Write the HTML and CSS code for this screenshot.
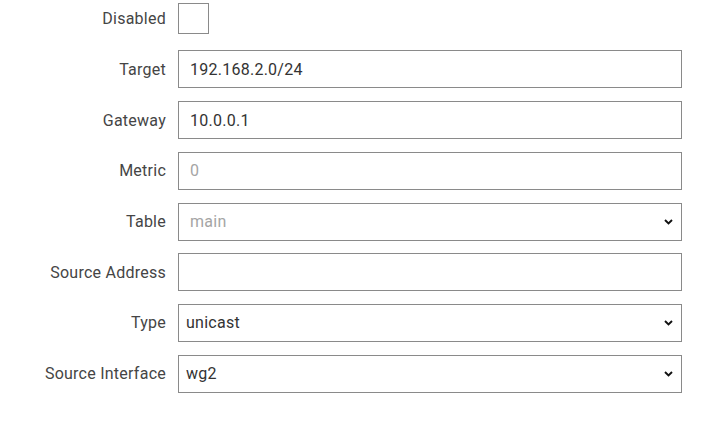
FILE: index.html
```html
<!DOCTYPE html>
<html>
<head>
<meta charset="utf-8">
<link rel="stylesheet" href="styles.css">
</head>
<body>
<form class="form">
  <div class="row row-first">
    <label class="label" for="disabled">Disabled</label>
    <div class="control"><input id="disabled" class="checkbox" type="checkbox"></div>
  </div>
  <div class="row">
    <label class="label" for="target">Target</label>
    <div class="control"><input id="target" class="text" type="text" value="192.168.2.0/24"></div>
  </div>
  <div class="row">
    <label class="label" for="gateway">Gateway</label>
    <div class="control"><input id="gateway" class="text" type="text" value="10.0.0.1"></div>
  </div>
  <div class="row">
    <label class="label" for="metric">Metric</label>
    <div class="control"><input id="metric" class="text" type="text" placeholder="0"></div>
  </div>
  <div class="row">
    <label class="label" for="table">Table</label>
    <div class="control select-wrap">
      <select id="table" class="select select-placeholder"><option>main</option></select>
      <svg class="chevron" width="9" height="6" viewBox="0 0 9 6"><polyline points="1,1 4.5,4.5 8,1" fill="none" stroke="#111" stroke-width="1.9"/></svg>
    </div>
  </div>
  <div class="row">
    <label class="label" for="srcaddr">Source Address</label>
    <div class="control"><input id="srcaddr" class="text" type="text"></div>
  </div>
  <div class="row">
    <label class="label" for="type">Type</label>
    <div class="control select-wrap">
      <select id="type" class="select"><option>unicast</option></select>
      <svg class="chevron" width="9" height="6" viewBox="0 0 9 6"><polyline points="1,1 4.5,4.5 8,1" fill="none" stroke="#111" stroke-width="1.9"/></svg>
    </div>
  </div>
  <div class="row">
    <label class="label" for="srciface">Source Interface</label>
    <div class="control select-wrap">
      <select id="srciface" class="select"><option>wg2</option></select>
      <svg class="chevron" width="9" height="6" viewBox="0 0 9 6"><polyline points="1,1 4.5,4.5 8,1" fill="none" stroke="#111" stroke-width="1.9"/></svg>
    </div>
  </div>
</form>
</body>
</html>
```

FILE: styles.css
```css
html, body {
  margin: 0;
  padding: 0;
  background: #fff;
}

body {
  font-family: Roboto, "Liberation Sans", sans-serif;
  font-size: 16px;
  letter-spacing: 0.25px;
  color: #454545;
  width: 710px;
  height: 425px;
  overflow: hidden;
}

.form {
  display: flex;
  flex-direction: column;
  gap: 12.7px;
  margin: 0;
}

.row {
  display: flex;
  align-items: center;
  gap: 12px;
  height: 38px;
}

.row-first {
  height: 37.8px;
}

.label {
  width: 166px;
  text-align: right;
  flex: none;
  color: #454545;
}

.control {
  width: 504px;
  height: 38px;
  display: flex;
  align-items: center;
  flex: none;
}

.select-wrap {
  position: relative;
}

.checkbox {
  appearance: none;
  -webkit-appearance: none;
  margin: 0;
  width: 31px;
  height: 31px;
  border: 1px solid #8a8a8a;
  background: #fff;
  box-sizing: border-box;
}

.text,
.select {
  appearance: none;
  -webkit-appearance: none;
  box-sizing: border-box;
  width: 504px;
  height: 38px;
  margin: 0;
  border: 1px solid #8a8a8a;
  border-radius: 0;
  background: #fff;
  font-family: Roboto, "Liberation Sans", sans-serif;
  font-size: 16px;
  letter-spacing: 0.25px;
  color: #333;
  outline: none;
}

.text {
  padding: 0 11px;
}

.text::placeholder {
  color: #a5a5a5;
}

.select {
  padding: 0 30px 0 7px;
}

.select-placeholder {
  color: #a5a5a5;
  padding-left: 11px;
}

.chevron {
  position: absolute;
  right: 9px;
  top: 16px;
  pointer-events: none;
}
```
